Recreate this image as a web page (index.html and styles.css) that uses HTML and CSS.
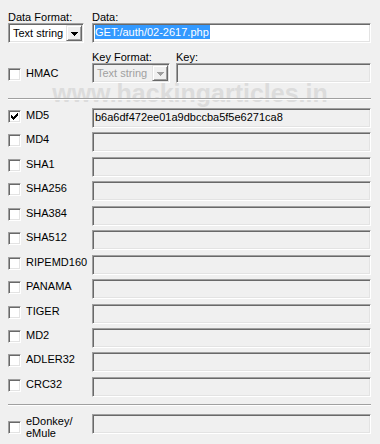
FILE: index.html
```html
<!DOCTYPE html>
<html lang="en">
<head>
	<meta charset="UTF-8">
	<title>Hash options</title>
	<link rel="stylesheet" href="styles.css">
</head>
<body>
	<div class="panel">
		<div class="wm">www.hackingarticles.in</div>

		<div class="top">
			<div class="field fmt">
				<div class="cap">Data Format:</div>
				<div class="combo">
					<span class="combo-text">Text string</span>
					<span class="combo-btn"><svg width="7" height="4" viewBox="0 0 7 4"><path d="M0 0h7v1h-1v1h-1v1h-1v1h-1v-1h-1v-1h-1v-1h-1z"/></svg></span>
				</div>
			</div>
			<div class="field grow">
				<div class="cap">Data:</div>
				<div class="box white"><span class="picked">GET:/auth/02-2617.php</span></div>
			</div>
		</div>

		<div class="hmac">
			<div class="opt"><span class="cb"></span><span class="lbl">HMAC</span></div>
			<div class="field keyfmt">
				<div class="cap">Key Format:</div>
				<div class="combo off">
					<span class="combo-text">Text string</span>
					<span class="combo-btn"><svg width="7" height="4" viewBox="0 0 7 4"><path d="M0 0h7v1h-1v1h-1v1h-1v1h-1v-1h-1v-1h-1v-1h-1z"/></svg></span>
				</div>
			</div>
			<div class="field grow">
				<div class="cap">Key:</div>
				<div class="box"></div>
			</div>
		</div>

		<div class="rule"></div>

		<div class="list">
			<div class="row">
				<div class="opt"><span class="cb on"><svg width="7" height="7" viewBox="0 0 7 7"><path d="M0 2h1v3h-1zM1 3h1v3h-1zM2 4h1v3h-1zM3 3h1v3h-1zM4 2h1v3h-1zM5 1h1v3h-1zM6 0h1v3h-1z"/></svg></span><span class="lbl">MD5</span></div>
				<div class="box">b6a6df472ee01a9dbccba5f5e6271ca8</div>
			</div>
			<div class="row"><div class="opt"><span class="cb"></span><span class="lbl">MD4</span></div><div class="box"></div></div>
			<div class="row"><div class="opt"><span class="cb"></span><span class="lbl">SHA1</span></div><div class="box"></div></div>
			<div class="row"><div class="opt"><span class="cb"></span><span class="lbl">SHA256</span></div><div class="box"></div></div>
			<div class="row"><div class="opt"><span class="cb"></span><span class="lbl">SHA384</span></div><div class="box"></div></div>
			<div class="row"><div class="opt"><span class="cb"></span><span class="lbl">SHA512</span></div><div class="box"></div></div>
			<div class="row"><div class="opt"><span class="cb"></span><span class="lbl">RIPEMD160</span></div><div class="box"></div></div>
			<div class="row"><div class="opt"><span class="cb"></span><span class="lbl">PANAMA</span></div><div class="box"></div></div>
			<div class="row"><div class="opt"><span class="cb"></span><span class="lbl">TIGER</span></div><div class="box"></div></div>
			<div class="row"><div class="opt"><span class="cb"></span><span class="lbl">MD2</span></div><div class="box"></div></div>
			<div class="row"><div class="opt"><span class="cb"></span><span class="lbl">ADLER32</span></div><div class="box"></div></div>
			<div class="row"><div class="opt"><span class="cb"></span><span class="lbl">CRC32</span></div><div class="box"></div></div>
		</div>

		<div class="rule rule-low"></div>

		<div class="row ed">
			<div class="opt"><span class="cb"></span><span class="lbl">eDonkey/<br>eMule</span></div>
			<div class="box"></div>
		</div>
	</div>
</body>
</html>
```

FILE: styles.css
```css
* {
	margin:0;
	padding:0;
	box-sizing:border-box;
}
html,body {
	height:100%;
	overflow:hidden;
}
body {
	background:#f0f0f0;
	color:#000;
	font-family:"Liberation Sans", Arial, sans-serif;
	font-size:11px;
}
.panel {
	position:relative;
	z-index:0;
	padding:11px 9px 0 8px;
}
/* watermark */
.wm {
	position:absolute;
	left:0;
	right:0;
	top:81px;
	z-index:-1;
	text-align:center;
	font-size:25px;
	line-height:25px;
	font-weight:bold;
	color:#dcdcdc;
	pointer-events:none;
}
.top,
.hmac {
	display:flex;
}
.hmac {
	margin-top:8px;
}
.field {
	display:flex;
	flex-direction:column;
}
.fmt {
	width:76px;
	margin-right:8px;
}
.keyfmt {
	width:78px;
	margin-right:6px;
}
.grow {
	flex:1;
}
.cap {
	line-height:12px;
	white-space:nowrap;
}
/* sunken edit box */
.box {
	height:20px;
	border:1px solid;
	border-color:#a0a0a0 #fff #fff #a0a0a0;
	box-shadow:inset 1px 1px #696969, inset -1px -1px #e3e3e3;
	background:#f0f0f0;
	padding:1px 0 0 2px;
	line-height:14px;
	white-space:nowrap;
	overflow:hidden;
}
.box.white {
	background:#fff;
}
.picked {
	display:inline-block;
	background:#3399ff;
	color:#fff;
	line-height:14px;
	padding-right:1px;
}
/* combobox */
.combo {
	display:flex;
	height:20px;
	border:1px solid;
	border-color:#a0a0a0 #fff #fff #a0a0a0;
	box-shadow:inset 1px 1px #696969, inset -1px -1px #e3e3e3;
	background:#fff;
	padding:1px;
}
.combo-text {
	flex:1;
	padding:1px 0 0 3px;
	line-height:14px;
	white-space:nowrap;
	overflow:hidden;
}
.combo-btn {
	display:flex;
	align-items:center;
	justify-content:center;
	width:16px;
	background:#f0f0f0;
	border:1px solid;
	border-color:#e3e3e3 #696969 #696969 #e3e3e3;
	box-shadow:inset 1px 1px #fff, inset -1px -1px #a0a0a0;
}
.combo-btn svg {
	fill:#000;
	shape-rendering:crispEdges;
	margin-top:1px;
}
.combo.off {
	background:#f0f0f0;
	color:#a0a0a0;
}
.combo.off .combo-btn svg {
	fill:#a0a0a0;
}
/* checkbox + label */
.opt {
	display:flex;
	align-items:flex-start;
	width:84px;
	flex:none;
}
.hmac .opt {
	padding-top:15px;
}
.cb {
	display:flex;
	align-items:center;
	justify-content:center;
	width:13px;
	height:13px;
	margin-top:2px;
	margin-right:5px;
	flex:none;
	background:#fff;
	border:1px solid;
	border-color:#a0a0a0 #fff #fff #a0a0a0;
	box-shadow:inset 1px 1px #696969, inset -1px -1px #e3e3e3;
}
.cb svg {
	fill:#000;
	shape-rendering:crispEdges;
}
.lbl {
	margin-top:1px;
	line-height:13px;
	white-space:nowrap;
}
.rule {
	height:2px;
	margin-top:15px;
	border-top:1px solid #a0a0a0;
	border-bottom:1px solid #fff;
}
.rule-low {
	margin-top:7px;
}
.list {
	display:flex;
	flex-direction:column;
	gap:4.45px;
	margin-top:8px;
}
.row {
	display:flex;
}
.row .box {
	flex:1;
}
.ed {
	margin-top:8px;
}
.ed .cb {
	margin-top:7px;
}
.ed .lbl {
	line-height:12.5px;
}
```
